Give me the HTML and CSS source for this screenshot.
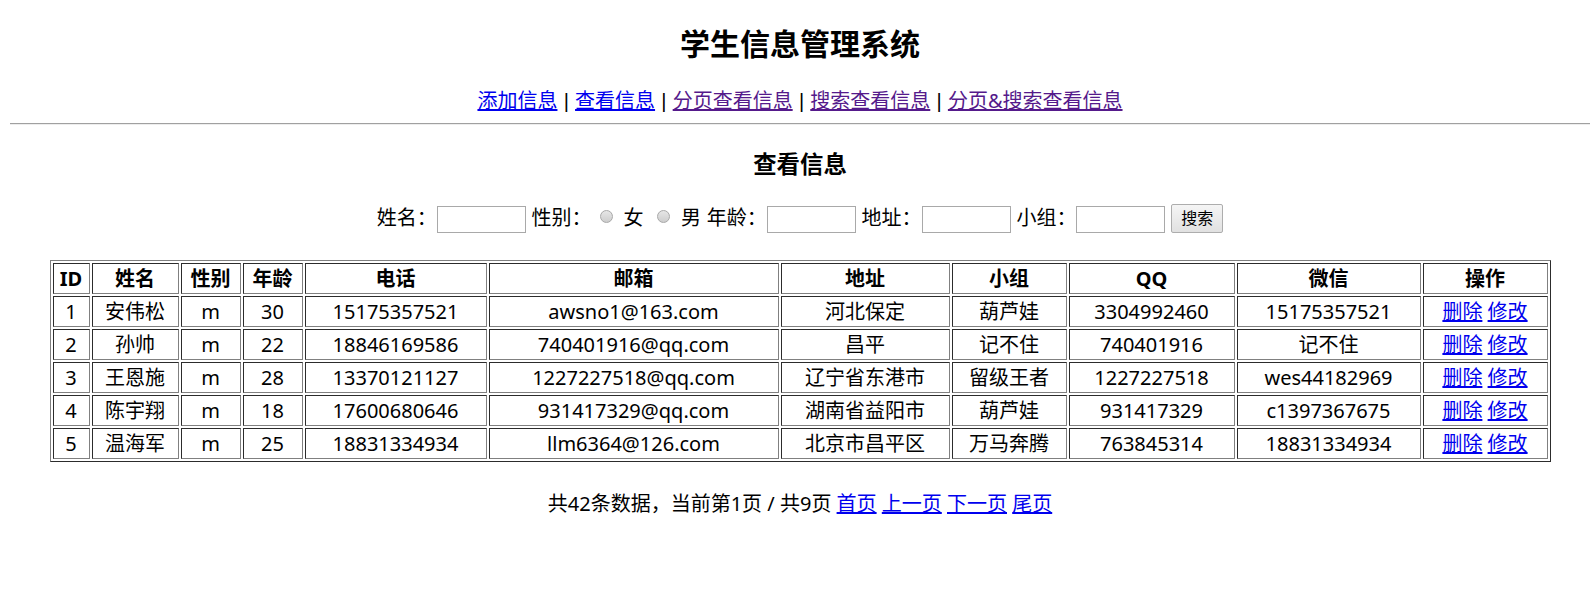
FILE: index.html
```
<!DOCTYPE html>
<html lang="zh-CN">
<head>
<meta charset="utf-8">
<title>学生信息管理系统</title>
<link rel="stylesheet" href="styles.css">
</head>
<body>
<h2 class="title">学生信息管理系统</h2>
<div class="nav"><a class="link" href="#add">添加信息</a> <span class="sep">|</span> <a class="link" href="#list">查看信息</a> <span class="sep">|</span> <a class="link visited" href="#page">分页查看信息</a> <span class="sep">|</span> <a class="link visited" href="#search">搜索查看信息</a> <span class="sep">|</span> <a class="link visited" href="#pagesearch">分页&amp;搜索查看信息</a></div>
<hr class="rule">
<h3 class="section-title">查看信息</h3>
<form class="search">姓名：<input class="field" type="text"> 性别：<input class="radio" type="radio" name="sex"> 女 <input class="radio" type="radio" name="sex"> 男 年龄：<input class="field" type="text"> 地址：<input class="field" type="text"> 小组：<input class="field" type="text"> <button class="btn" type="button">搜索</button></form>
<table class="data">
<thead>
<tr>
<th class="c-id">ID</th><th class="c-name">姓名</th><th class="c-sex">性别</th><th class="c-age">年龄</th><th class="c-tel">电话</th><th class="c-mail">邮箱</th><th class="c-addr">地址</th><th class="c-group">小组</th><th class="c-qq">QQ</th><th class="c-wx">微信</th><th class="c-op">操作</th>
</tr>
</thead>
<tbody>
<tr><td>1</td><td>安伟松</td><td>m</td><td>30</td><td>15175357521</td><td>awsno1@163.com</td><td>河北保定</td><td>葫芦娃</td><td>3304992460</td><td>15175357521</td><td><a class="link" href="#d1">删除</a> <a class="link" href="#e1">修改</a></td></tr>
<tr><td>2</td><td>孙帅</td><td>m</td><td>22</td><td>18846169586</td><td>740401916@qq.com</td><td>昌平</td><td>记不住</td><td>740401916</td><td>记不住</td><td><a class="link" href="#d2">删除</a> <a class="link" href="#e2">修改</a></td></tr>
<tr><td>3</td><td>王恩施</td><td>m</td><td>28</td><td>13370121127</td><td>1227227518@qq.com</td><td>辽宁省东港市</td><td>留级王者</td><td>1227227518</td><td>wes44182969</td><td><a class="link" href="#d3">删除</a> <a class="link" href="#e3">修改</a></td></tr>
<tr><td>4</td><td>陈宇翔</td><td>m</td><td>18</td><td>17600680646</td><td>931417329@qq.com</td><td>湖南省益阳市</td><td>葫芦娃</td><td>931417329</td><td>c1397367675</td><td><a class="link" href="#d4">删除</a> <a class="link" href="#e4">修改</a></td></tr>
<tr><td>5</td><td>温海军</td><td>m</td><td>25</td><td>18831334934</td><td>llm6364@126.com</td><td>北京市昌平区</td><td>万马奔腾</td><td>763845314</td><td>18831334934</td><td><a class="link" href="#d5">删除</a> <a class="link" href="#e5">修改</a></td></tr>
</tbody>
</table>
<div class="pager">共42条数据，当前第1页 / 共9页 <a class="link" href="#first">首页</a> <a class="link" href="#prev">上一页</a> <a class="link" href="#next">下一页</a> <a class="link" href="#last">尾页</a></div>
</body>
</html>
```
FILE: styles.css
```
html, body {
  background: #ffffff;
}

body {
  margin: 0 6px 0 10px;
  font-family: "Noto Sans", "Noto Sans CJK SC", sans-serif;
  font-size: 20px;
  color: #000000;
}

.link {
  color: #0000ee;
  text-decoration: underline;
}

.link.visited {
  color: #551a8b;
}

.title {
  margin: 24px 0 0;
  font-size: 30px;
  line-height: 40px;
  font-weight: bold;
  text-align: center;
}

.nav {
  margin-top: 24px;
  line-height: 26px;
  text-align: center;
  word-spacing: 1px;
}

.sep {
  font-family: "Liberation Sans", sans-serif;
}

.rule {
  margin: 9px 0 0;
  height: 0;
  border: 0;
  border-top: 1px solid #a0a0a0;
  border-bottom: 1px solid #ededed;
}

.section-title {
  margin: 24px 0 0;
  font-size: 23.4px;
  line-height: 31px;
  font-weight: bold;
  text-align: center;
}

.search {
  margin: 23px 0 0;
  line-height: 30px;
  text-align: center;
  word-spacing: 0.6px;
}

.field {
  box-sizing: border-box;
  width: 89px;
  height: 27px;
  margin: 0;
  padding: 0 3px;
  border: 1px solid #a9a9a9;
  background: #ffffff;
  vertical-align: middle;
  font-size: 14px;
}

.radio {
  appearance: none;
  -webkit-appearance: none;
  box-sizing: border-box;
  width: 13px;
  height: 13px;
  margin: 0 5px 0 8px;
  border: 1px solid #a8a8a8;
  border-radius: 50%;
  background: linear-gradient(#e6e6e6, #cdcdcd);
  vertical-align: 2px;
}

.btn {
  box-sizing: border-box;
  width: 52px;
  height: 29px;
  margin: 0;
  padding: 0;
  border: 1px solid #adadad;
  border-radius: 2px;
  background: linear-gradient(#f5f5f5, #e1e1e1);
  font-family: "Noto Sans", "Noto Sans CJK SC", sans-serif;
  font-size: 16px;
  line-height: 27px;
  color: #000000;
  vertical-align: text-top;
}

.data {
  width: 95%;
  margin: 27px auto 0;
  table-layout: fixed;
  border-collapse: separate;
  border-spacing: 2px;
  border: 1px outset grey;
}

.data tr {
  height: 31px;
}

.data th,
.data td {
  box-sizing: border-box;
  padding: 1px;
  border: 1px inset grey;
  line-height: 26px;
  text-align: center;
  white-space: nowrap;
}

.data th {
  font-weight: bold;
}

.c-id { width: 37px; }
.c-name { width: 87px; }
.c-sex { width: 60px; }
.c-age { width: 60px; }
.c-tel { width: 182px; }
.c-mail { width: 290px; }
.c-addr { width: 169px; }
.c-group { width: 115px; }
.c-qq { width: 166px; }
.c-wx { width: 184px; }
.c-op { width: 125px; }

.pager {
  margin-top: 29px;
  line-height: 26px;
  text-align: center;
}
```
